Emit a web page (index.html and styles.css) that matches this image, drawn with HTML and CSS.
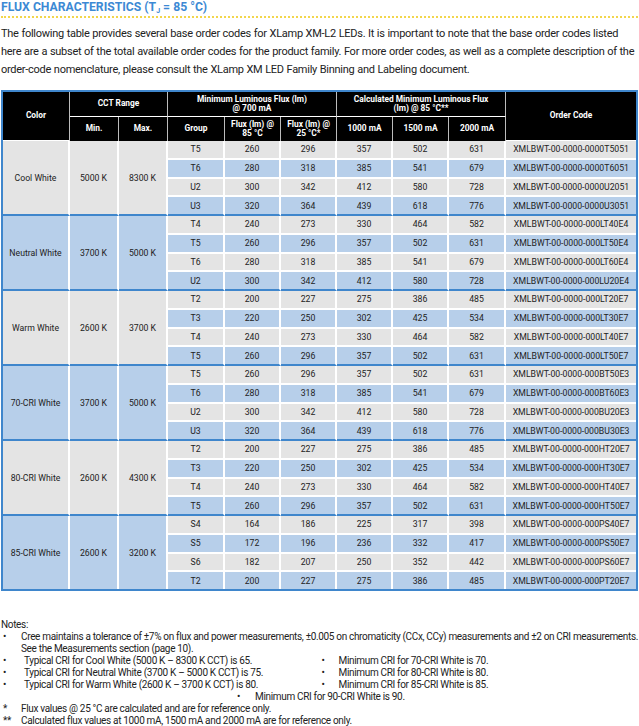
FILE: index.html
```html
<!DOCTYPE html>
<html>
<head>
<meta charset="utf-8">
<link rel="stylesheet" href="styles.css">
</head>
<body>
<h2 class="title">FLUX CHARACTERISTICS (T<sub>J</sub> = 85 °C)</h2>
<p class="intro">The following table provides several base order codes for XLamp XM-L2 LEDs. It is important to note that the base order codes listed here are a subset of the total available order codes for the product family. For more order codes, as well as a complete description of the order-code nomenclature, please consult the XLamp XM LED Family Binning and Labeling document.</p>
<table class="flux">
<colgroup>
<col class="c-color"><col class="c-min"><col class="c-max"><col class="c-group"><col class="c-f85"><col class="c-f25"><col class="c-1000"><col class="c-1500"><col class="c-2000"><col class="c-code">
</colgroup>
<thead>
<tr>
<th rowspan="2">Color</th>
<th colspan="2">CCT Range</th>
<th colspan="3">Minimum Luminous Flux (lm)<br>@ 700 mA</th>
<th colspan="3">Calculated Minimum Luminous Flux<br>(lm) @ 85 °C**</th>
<th rowspan="2" class="last">Order Code</th>
</tr>
<tr>
<th>Min.</th><th>Max.</th><th>Group</th><th>Flux (lm) @<br>85 °C</th><th>Flux (lm) @<br>25 °C*</th><th>1000 mA</th><th>1500 mA</th><th>2000 mA</th>
</tr>
</thead>
<tbody class="grp g">
<tr class="r g"><td rowspan="4" class="lead">Cool White</td><td rowspan="4" class="lead">5000 K</td><td rowspan="4" class="lead">8300 K</td><td>T5</td><td>260</td><td>296</td><td>357</td><td>502</td><td>631</td><td class="last">XMLBWT-00-0000-0000T5051</td></tr>
<tr class="r b"><td>T6</td><td>280</td><td>318</td><td>385</td><td>541</td><td>679</td><td class="last">XMLBWT-00-0000-0000T6051</td></tr>
<tr class="r g"><td>U2</td><td>300</td><td>342</td><td>412</td><td>580</td><td>728</td><td class="last">XMLBWT-00-0000-0000U2051</td></tr>
<tr class="r b end"><td>U3</td><td>320</td><td>364</td><td>439</td><td>618</td><td>776</td><td class="last">XMLBWT-00-0000-0000U3051</td></tr>
</tbody>
<tbody class="grp b">
<tr class="r g"><td rowspan="4" class="lead">Neutral White</td><td rowspan="4" class="lead">3700 K</td><td rowspan="4" class="lead">5000 K</td><td>T4</td><td>240</td><td>273</td><td>330</td><td>464</td><td>582</td><td class="last">XMLBWT-00-0000-000LT40E4</td></tr>
<tr class="r b"><td>T5</td><td>260</td><td>296</td><td>357</td><td>502</td><td>631</td><td class="last">XMLBWT-00-0000-000LT50E4</td></tr>
<tr class="r g"><td>T6</td><td>280</td><td>318</td><td>385</td><td>541</td><td>679</td><td class="last">XMLBWT-00-0000-000LT60E4</td></tr>
<tr class="r b end"><td>U2</td><td>300</td><td>342</td><td>412</td><td>580</td><td>728</td><td class="last">XMLBWT-00-0000-000LU20E4</td></tr>
</tbody>
<tbody class="grp g">
<tr class="r g"><td rowspan="4" class="lead">Warm White</td><td rowspan="4" class="lead">2600 K</td><td rowspan="4" class="lead">3700 K</td><td>T2</td><td>200</td><td>227</td><td>275</td><td>386</td><td>485</td><td class="last">XMLBWT-00-0000-000LT20E7</td></tr>
<tr class="r b"><td>T3</td><td>220</td><td>250</td><td>302</td><td>425</td><td>534</td><td class="last">XMLBWT-00-0000-000LT30E7</td></tr>
<tr class="r g"><td>T4</td><td>240</td><td>273</td><td>330</td><td>464</td><td>582</td><td class="last">XMLBWT-00-0000-000LT40E7</td></tr>
<tr class="r b end"><td>T5</td><td>260</td><td>296</td><td>357</td><td>502</td><td>631</td><td class="last">XMLBWT-00-0000-000LT50E7</td></tr>
</tbody>
<tbody class="grp b">
<tr class="r g"><td rowspan="4" class="lead">70-CRI White</td><td rowspan="4" class="lead">3700 K</td><td rowspan="4" class="lead">5000 K</td><td>T5</td><td>260</td><td>296</td><td>357</td><td>502</td><td>631</td><td class="last">XMLBWT-00-0000-000BT50E3</td></tr>
<tr class="r b"><td>T6</td><td>280</td><td>318</td><td>385</td><td>541</td><td>679</td><td class="last">XMLBWT-00-0000-000BT60E3</td></tr>
<tr class="r g"><td>U2</td><td>300</td><td>342</td><td>412</td><td>580</td><td>728</td><td class="last">XMLBWT-00-0000-000BU20E3</td></tr>
<tr class="r b end"><td>U3</td><td>320</td><td>364</td><td>439</td><td>618</td><td>776</td><td class="last">XMLBWT-00-0000-000BU30E3</td></tr>
</tbody>
<tbody class="grp g">
<tr class="r g"><td rowspan="4" class="lead">80-CRI White</td><td rowspan="4" class="lead">2600 K</td><td rowspan="4" class="lead">4300 K</td><td>T2</td><td>200</td><td>227</td><td>275</td><td>386</td><td>485</td><td class="last">XMLBWT-00-0000-000HT20E7</td></tr>
<tr class="r b"><td>T3</td><td>220</td><td>250</td><td>302</td><td>425</td><td>534</td><td class="last">XMLBWT-00-0000-000HT30E7</td></tr>
<tr class="r g"><td>T4</td><td>240</td><td>273</td><td>330</td><td>464</td><td>582</td><td class="last">XMLBWT-00-0000-000HT40E7</td></tr>
<tr class="r b end"><td>T5</td><td>260</td><td>296</td><td>357</td><td>502</td><td>631</td><td class="last">XMLBWT-00-0000-000HT50E7</td></tr>
</tbody>
<tbody class="grp b">
<tr class="r g"><td rowspan="4" class="lead lastrow">85-CRI White</td><td rowspan="4" class="lead lastrow">2600 K</td><td rowspan="4" class="lead lastrow">3200 K</td><td>S4</td><td>164</td><td>186</td><td>225</td><td>317</td><td>398</td><td class="last">XMLBWT-00-0000-000PS40E7</td></tr>
<tr class="r b"><td>S5</td><td>172</td><td>196</td><td>236</td><td>332</td><td>417</td><td class="last">XMLBWT-00-0000-000PS50E7</td></tr>
<tr class="r g"><td>S6</td><td>182</td><td>207</td><td>250</td><td>352</td><td>442</td><td class="last">XMLBWT-00-0000-000PS60E7</td></tr>
<tr class="r b end lastrow"><td>T2</td><td>200</td><td>227</td><td>275</td><td>386</td><td>485</td><td class="last">XMLBWT-00-0000-000PT20E7</td></tr>
</tbody>
</table>
<div class="notes">
<div class="notes-h">Notes:</div>
<div class="n n1"><span class="mk">•</span><span class="tx nowrap">Cree maintains a tolerance of ±7% on flux and power measurements, ±0.005 on chromaticity (CCx, CCy) measurements and ±2 on CRI measurements.<br>See the Measurements section (page 10).</span></div>
<div class="cols">
<div class="col">
<div class="n n2"><span class="mk">•</span><span class="tx">Typical CRI for Cool White (5000 K – 8300 K CCT) is 65.</span></div>
<div class="n n2"><span class="mk">•</span><span class="tx">Typical CRI for Neutral White (3700 K – 5000 K CCT) is 75.</span></div>
<div class="n n2"><span class="mk">•</span><span class="tx">Typical CRI for Warm White (2600 K – 3700 K CCT) is 80.</span></div>
</div>
<div class="col col-r">
<div class="n n3"><span class="mk">•</span><span class="tx">Minimum CRI for 70-CRI White is 70.</span></div>
<div class="n n3"><span class="mk">•</span><span class="tx">Minimum CRI for 80-CRI White is 80.</span></div>
<div class="n n3"><span class="mk">•</span><span class="tx">Minimum CRI for 85-CRI White is 85.</span></div>
</div>
</div>
<div class="n n-center"><span class="mk">•</span><span class="tx">Minimum CRI for 90-CRI White is 90.</span></div>
<div class="n n1"><span class="mk">*</span><span class="tx">Flux values @ 25 °C are calculated and are for reference only.</span></div>
<div class="n n1"><span class="mk">**</span><span class="tx">Calculated flux values at 1000 mA, 1500 mA and 2000 mA are for reference only.</span></div>
</div>
</body>
</html>
```
FILE: styles.css
```css
html, body {
  margin: 0;
  padding: 0;
  background: #fff;
}
body {
  padding: 0 1px;
  font-family: Roboto, "Liberation Sans", sans-serif;
  color: #222;
}
.title {
  margin: 0;
  padding: 0 0 1px;
  font-size: 12.2px;
  line-height: 15px;
  font-weight: 700;
  color: #3c89d4;
  border-bottom: 2px dotted #f2d64b;
}
.title sub {
  font-size: 7px;
  vertical-align: -2px;
  line-height: 0;
}
.intro {
  margin: 7px 0 0;
  font-size: 11px;
  letter-spacing: -0.27px;
  word-spacing: 0.3px;
  line-height: 18px;
}
.flux {
  margin-top: 11px;
  width: 637px;
  table-layout: fixed;
  border-collapse: separate;
  border-spacing: 0;
  border: 2px solid #3f86cc;
  font-size: 8.7px;
}
.c-color { width: 67px; }
.c-min { width: 49px; }
.c-max { width: 49px; }
.c-group { width: 57px; }
.c-f85 { width: 56px; }
.c-f25 { width: 56px; }
.c-1000 { width: 56px; }
.c-1500 { width: 56px; }
.c-2000 { width: 57px; }
.c-code { width: 130px; }
.flux th {
  background: #000;
  color: #fff;
  font-weight: 700;
  font-size: 8.4px;
  line-height: 9.5px;
  height: 24px;
  padding: 0;
  text-align: center;
  border-right: 1px solid #bcbcbc;
  border-bottom: 1px solid #fff;
}
.flux thead tr:last-child th { border-bottom: none; }
.flux th.last { border-right: none; }
.flux td {
  padding: 0;
  text-align: center;
  height: 16.75px;
  line-height: 10px;
  border-right: 2px solid #fff;
  border-bottom: 2px solid #fff;
  color: #222;
}
.flux td.last { border-right: none; }
.r.g td { background: #e4e4e4; }
.r.b td { background: #b7cfea; }
.grp.g td.lead { background: #e4e4e4; }
.grp.b td.lead { background: #b7cfea; }
.flux tr.end td, .flux td.lead { border-bottom-color: #3f86cc; }
.flux tr.lastrow td, .flux td.lastrow { border-bottom: none; }
.notes {
  margin-top: 28px;
  font-size: 10px;
  letter-spacing: -0.33px;
  line-height: 12px;
  color: #222;
}
.n {
  display: flex;
}
.n .mk {
  flex: none;
  width: 20px;
  padding-left: 2px;
  box-sizing: border-box;
}
.nowrap { white-space: nowrap; }
.n2 .mk { width: 23px; }
.n3 .mk { width: 19px; }
.cols {
  display: flex;
}
.col { width: 320px; }
.col-r { padding-left: 0; }
.n-center {
  padding-left: 234px;
}
```
